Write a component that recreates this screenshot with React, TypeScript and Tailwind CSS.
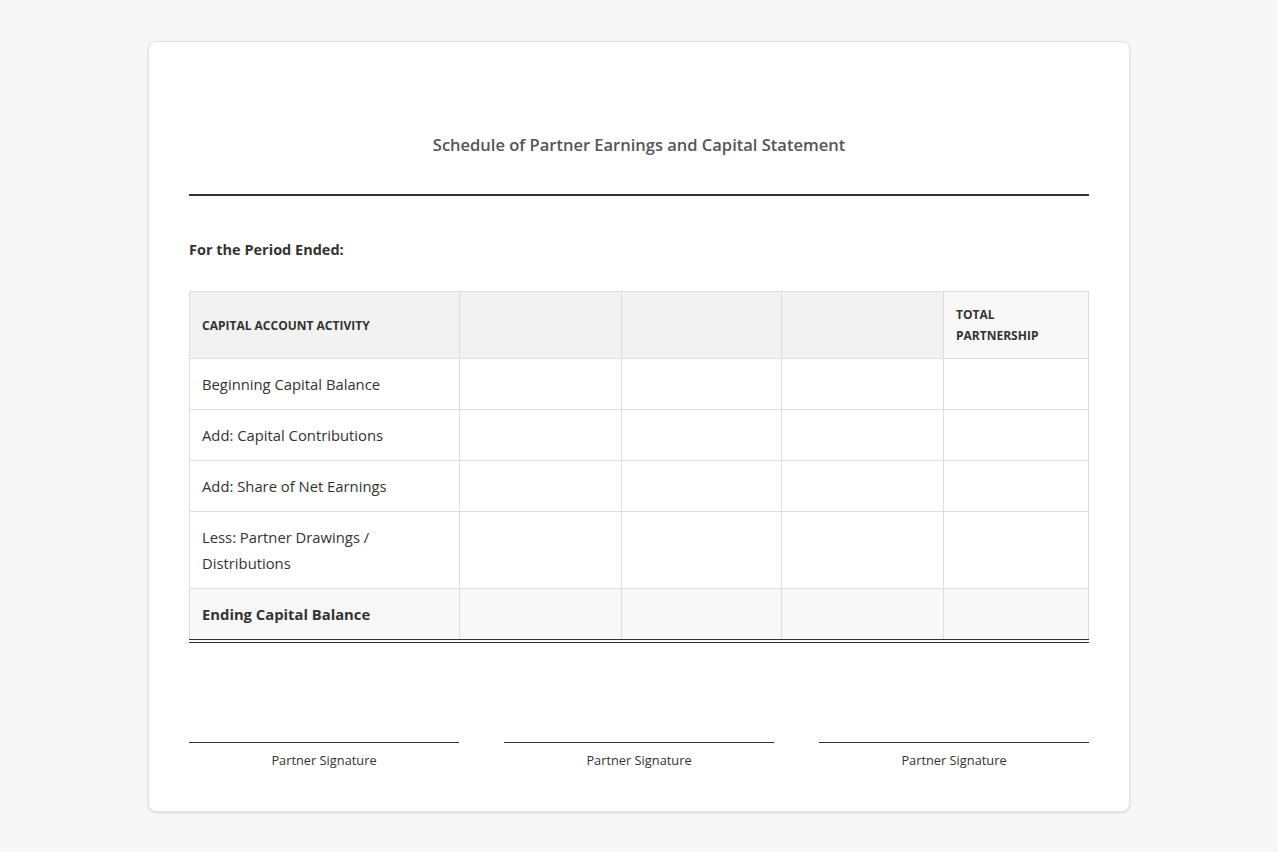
export default function App() {
  const rows = [
    "Beginning Capital Balance",
    "Add: Capital Contributions",
    "Add: Share of Net Earnings",
    "Less: Partner Drawings / Distributions",
  ];
  const cell = "border border-[#dddddd] px-3 py-3 align-middle";
  return (
    <div className="min-h-screen bg-[#f7f7f7] pt-[41px] pb-10 text-[#333]" style={{ fontFamily: '"Open Sans", "Noto Sans", sans-serif' }}>
      <div className="mx-auto w-[982px] h-[771px] bg-white border border-[#e2e2e2] rounded-lg shadow-sm px-10">
        <div className="h-[91px]" />
        <h1 className="text-center text-[16.5px] font-semibold text-[#555] leading-6">Schedule of Partner Earnings and Capital Statement</h1>
        <div className="mt-[37px] border-t-2 border-[#333]" />
        <div className="mt-[42px] text-[14.5px] font-bold leading-6">For the Period Ended:</div>
        <table className="mt-[29px] w-full border-collapse text-[14.8px] leading-[26px] border-b-[4px] border-double border-b-[#333]">
          <colgroup>
            <col className="w-[270px]" /><col className="w-[162px]" /><col className="w-[161px]" /><col className="w-[162px]" /><col className="w-[145px]" />
          </colgroup>
          <thead>
            <tr className="bg-[#f2f2f2] h-[67px]">
              <th className="border border-[#dddddd] px-3 text-left text-[12px] font-bold uppercase leading-[21px]">Capital Account Activity</th>
              <th className={cell}></th>
              <th className={cell}></th>
              <th className={cell}></th>
              <th className="border border-[#dddddd] px-3 text-left text-[12px] font-bold uppercase leading-[21px] bg-[#f8f8f8]">Total<br />Partnership</th>
            </tr>
          </thead>
          <tbody>
            {rows.map((r) => (
              <tr key={r}>
                <td className={cell + " pr-16"}>{r}</td>
                <td className={cell}></td>
                <td className={cell}></td>
                <td className={cell}></td>
                <td className={cell}></td>
              </tr>
            ))}
            <tr className="bg-[#f8f8f8]">
              <td className={cell + " font-bold"}>Ending Capital Balance</td>
              <td className={cell}></td>
              <td className={cell}></td>
              <td className={cell}></td>
              <td className={cell}></td>
            </tr>
          </tbody>
        </table>
        <div className="mt-[99px] flex justify-between">
          {[0, 1, 2].map((i) => (
            <div key={i} className="w-[270px] border-t border-[#333] pt-[7px] text-center text-[12.8px] leading-5">Partner Signature</div>
          ))}
        </div>
      </div>
    </div>
  );
}
